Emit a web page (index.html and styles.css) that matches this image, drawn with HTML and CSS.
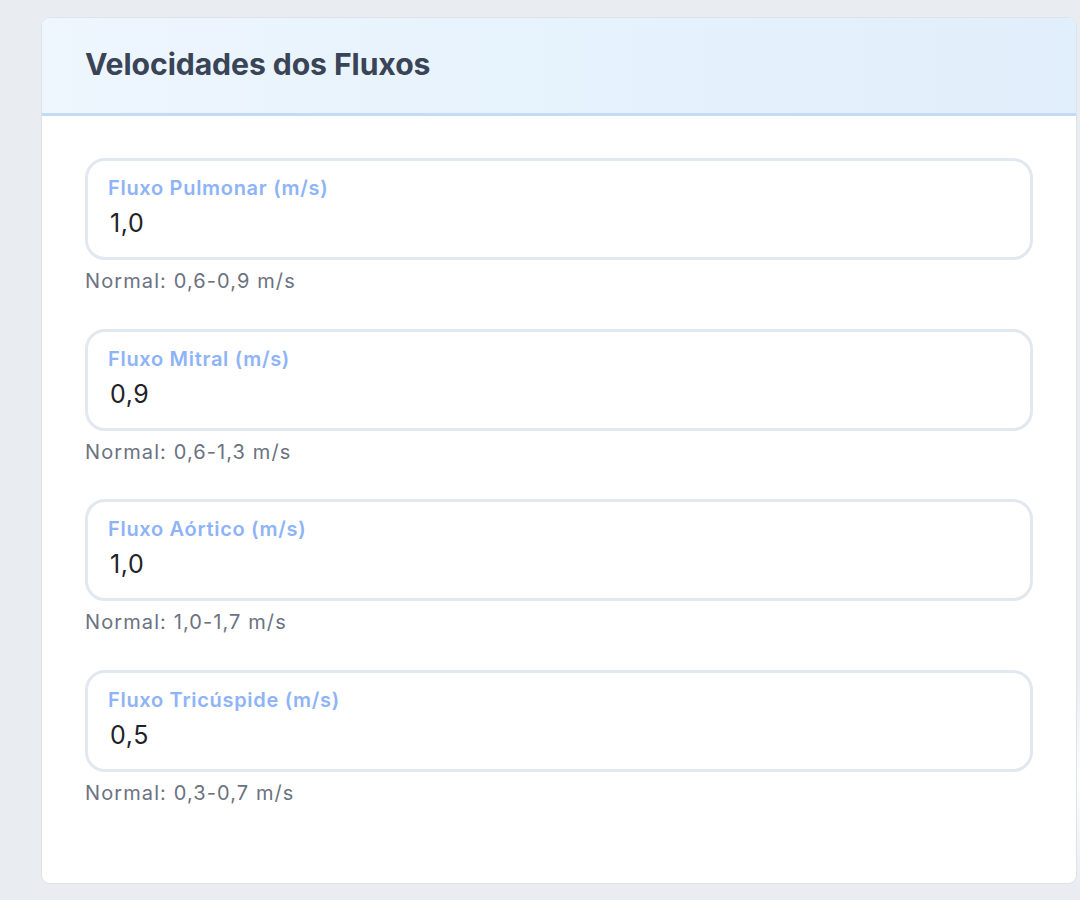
FILE: index.html
```html
<!DOCTYPE html>
<html lang="pt">
<head>
<meta charset="utf-8">
<link rel="stylesheet" href="styles.css">
</head>
<body>
<div class="page">
  <section class="card">
    <header class="card-header">
      <h2 class="title">Velocidades dos Fluxos</h2>
    </header>
    <div class="card-body">
      <div class="field">
        <div class="box">
          <label class="label">Fluxo Pulmonar (m/s)</label>
          <div class="value">1,0</div>
        </div>
        <p class="hint">Normal: 0,6-0,9 m/s</p>
      </div>
      <div class="field">
        <div class="box">
          <label class="label">Fluxo Mitral (m/s)</label>
          <div class="value">0,9</div>
        </div>
        <p class="hint">Normal: 0,6-1,3 m/s</p>
      </div>
      <div class="field">
        <div class="box">
          <label class="label">Fluxo Aórtico (m/s)</label>
          <div class="value">1,0</div>
        </div>
        <p class="hint">Normal: 1,0-1,7 m/s</p>
      </div>
      <div class="field">
        <div class="box">
          <label class="label">Fluxo Tricúspide (m/s)</label>
          <div class="value">0,5</div>
        </div>
        <p class="hint">Normal: 0,3-0,7 m/s</p>
      </div>
    </div>
  </section>
</div>
</body>
</html>
```

FILE: styles.css
```css
* { box-sizing: border-box; }
html, body { margin: 0; padding: 0; }
body {
  background: radial-gradient(ellipse 60px 110px at 1086px 780px, rgba(255,255,255,0.95), rgba(255,255,255,0) 100%), #e9ecf1;
  font-family: Inter, "Liberation Sans", sans-serif;
  width: 1080px;
  height: 900px;
  overflow: hidden;
}
.page {
  padding: 17px 3px 0 41px;
  height: 900px;
}
.card {
  background: #fff;
  border: 1px solid #dfe2e7;
  border-radius: 9px;
  overflow: hidden;
  height: 867px;
}
.card-header {
  height: 98px;
  padding: 0 43px;
  display: flex;
  align-items: center;
  background: linear-gradient(90deg, #eef6fe 0%, #e6f2fc 50%, #e1eefb 100%);
  border-bottom: 3px solid #c4dbf6;
}
.title {
  margin: 0;
  font-size: 30.2px;
  font-weight: 700;
  color: #394457;
  letter-spacing: -0.1px;
  padding-bottom: 3px;
}
.card-body {
  padding: 42px 43px 0 43px;
  display: flex;
  flex-direction: column;
  gap: 35.7px;
}
.field { display: flex; flex-direction: column; }
.box {
  border: 3px solid #e2e8f0;
  border-radius: 20px;
  height: 102px;
  padding: 14px 20px 0 20px;
  display: flex;
  flex-direction: column;
}
.label {
  font-size: 20px;
  font-weight: 600;
  color: #8eb3f7;
  line-height: 26px;
  letter-spacing: 0.7px;
}
.value {
  font-size: 25px;
  color: #1f2329;
  line-height: 30px;
  margin-top: 7px;
  padding-left: 2px;
  letter-spacing: 0.6px;
}
.hint {
  margin: 9px 0 0 0;
  font-size: 20px;
  color: #6b7280;
  line-height: 24px;
  letter-spacing: 1.1px;
}
```
